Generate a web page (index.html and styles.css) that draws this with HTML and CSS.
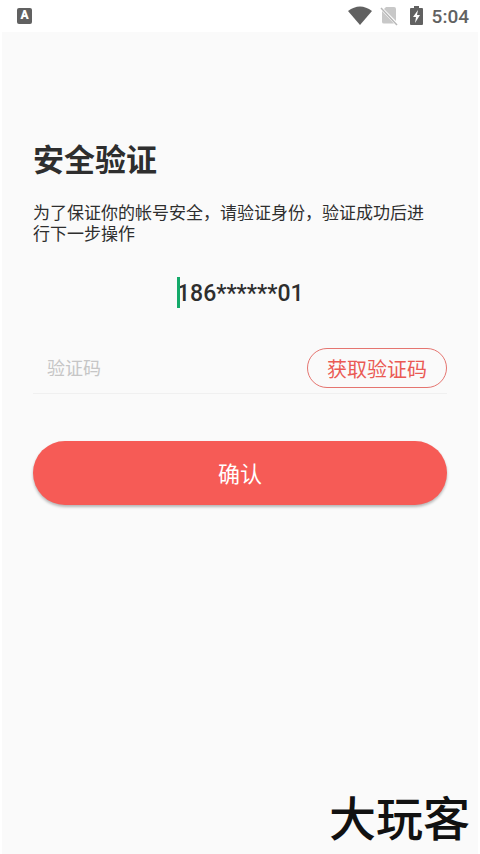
FILE: index.html
```html
<!DOCTYPE html>
<html lang="zh-CN">
<head>
<meta charset="utf-8">
<meta name="viewport" content="width=device-width, initial-scale=1">
<title>安全验证</title>
<link rel="stylesheet" href="styles.css">
</head>
<body>
<header class="status">
  <span class="badge">A</span>
  <div class="indicators">
    <svg class="wifi" viewBox="0 0 24 20" aria-hidden="true"><path d="M0 5Q12-4 24 5L12 19Z"/></svg>
    <svg class="sim" viewBox="0 0 18 20" aria-hidden="true"><path class="sim-card" d="M6 1H14Q16 1 16 3V15L4 3ZM2 5L14 17.500H4Q2 17.500 2 16Z"/><path class="sim-slash" d="M1 2L17 19"/></svg>
    <svg class="battery" viewBox="0 0 13 20" aria-hidden="true"><path d="M4 0H9V2H12Q13 2 13 3V18Q13 19 12 19H1Q0 19 0 18V3Q0 2 1 2H4Z"/><path class="bolt" d="M8 4L3 11H6L5 17L10 9H7Z"/></svg>
    <time>5:04</time>
  </div>
</header>
<main class="screen">
  <form class="verify">
    <h1>安全验证</h1>
    <p>为了保证你的帐号安全，请验证身份，验证成功后进行下一步操作</p>
    <div class="phone">
      <span class="caret"></span>
      <input type="text" value="186******01" size="11" aria-label="手机号">
    </div>
    <div class="code">
      <input type="text" placeholder="验证码" aria-label="验证码">
      <button type="button">获取验证码</button>
    </div>
    <button class="confirm" type="button">确认</button>
  </form>
  <footer class="brand">大玩客</footer>
</main>
</body>
</html>
```
FILE: styles.css
```css
* {
  box-sizing: border-box;
}

body {
  margin: 0;
  min-height: 100vh;
  display: flex;
  flex-direction: column;
  background: #fff;
  color: #2e2e2e;
  font-family: Roboto, "Noto Sans CJK SC", sans-serif;
}

input,
button {
  font: inherit;
  padding: 0;
  border: 0;
  outline: 0;
  background: transparent;
}

.status {
  height: 32px;
  padding: 0 11px 0 17px;
  display: flex;
  align-items: center;
  justify-content: space-between;
  color: #616161;
}

.badge {
  width: 15px;
  height: 16px;
  border-radius: 2px;
  background: #616161;
  color: #fff;
  font-size: 12px;
  font-weight: 900;
  line-height: 15px;
  text-align: center;
}

.indicators {
  display: flex;
  align-items: center;
  gap: 8px;
  font-size: 19px;
  font-weight: 500;
}

.indicators svg {
  height: 20px;
  fill: #616161;
}

.wifi {
  width: 24px;
}

.sim {
  width: 18px;
}

.indicators .sim-card {
  fill: #c8c8c8;
}

.sim-slash {
  stroke: #b8b8b8;
  stroke-width: 1.5;
}

.battery {
  width: 13px;
  margin: 0 1px 0 4px;
}

.indicators .bolt {
  fill: #fff;
}

.screen {
  flex: 1;
  display: flex;
  flex-direction: column;
  justify-content: space-between;
  margin: 0 2px;
  padding: 104px 31px 0;
  background: #fafafa;
}

.verify {
  display: flex;
  flex-direction: column;
}

h1 {
  margin: 0 0 18px;
  font-size: 31px;
  font-weight: 700;
  line-height: 49px;
}

p {
  margin: 0 0 32px;
  padding-right: 14px;
  font-size: 17px;
  line-height: 21px;
}

.phone {
  position: relative;
  align-self: center;
  width: 126px;
  height: 32px;
}

.phone input {
  width: 100%;
  height: 32px;
  color: inherit;
  font-size: 23px;
  font-weight: 500;
  text-align: center;
}

.caret {
  position: absolute;
  left: 0;
  top: 0;
  width: 3px;
  height: 31px;
  background: #14aa6a;
}

.code {
  display: flex;
  align-items: center;
  margin: 35px 0 47px;
  padding: 4px 0 5px;
  border-bottom: 1px solid #f0f0f0;
}

.code input {
  flex: 1;
  min-width: 0;
  height: 36px;
  padding-left: 14px;
  font-size: 18px;
}

.code input::placeholder {
  color: #c6c6c6;
}

.code button {
  width: 140px;
  height: 40px;
  border: 1px solid #e57570;
  border-radius: 20px;
  color: #ea5a54;
  font-size: 20px;
}

.confirm {
  height: 64px;
  padding-bottom: 2px;
  border-radius: 32px;
  background: #f65b56;
  box-shadow: 0 2px 3px rgba(0, 0, 0, 0.28);
  color: #fff;
  font-size: 22px;
}

.brand {
  align-self: flex-end;
  margin-right: -23px;
  color: #111;
  font-size: 47px;
  font-weight: 500;
  line-height: 68px;
}
```
